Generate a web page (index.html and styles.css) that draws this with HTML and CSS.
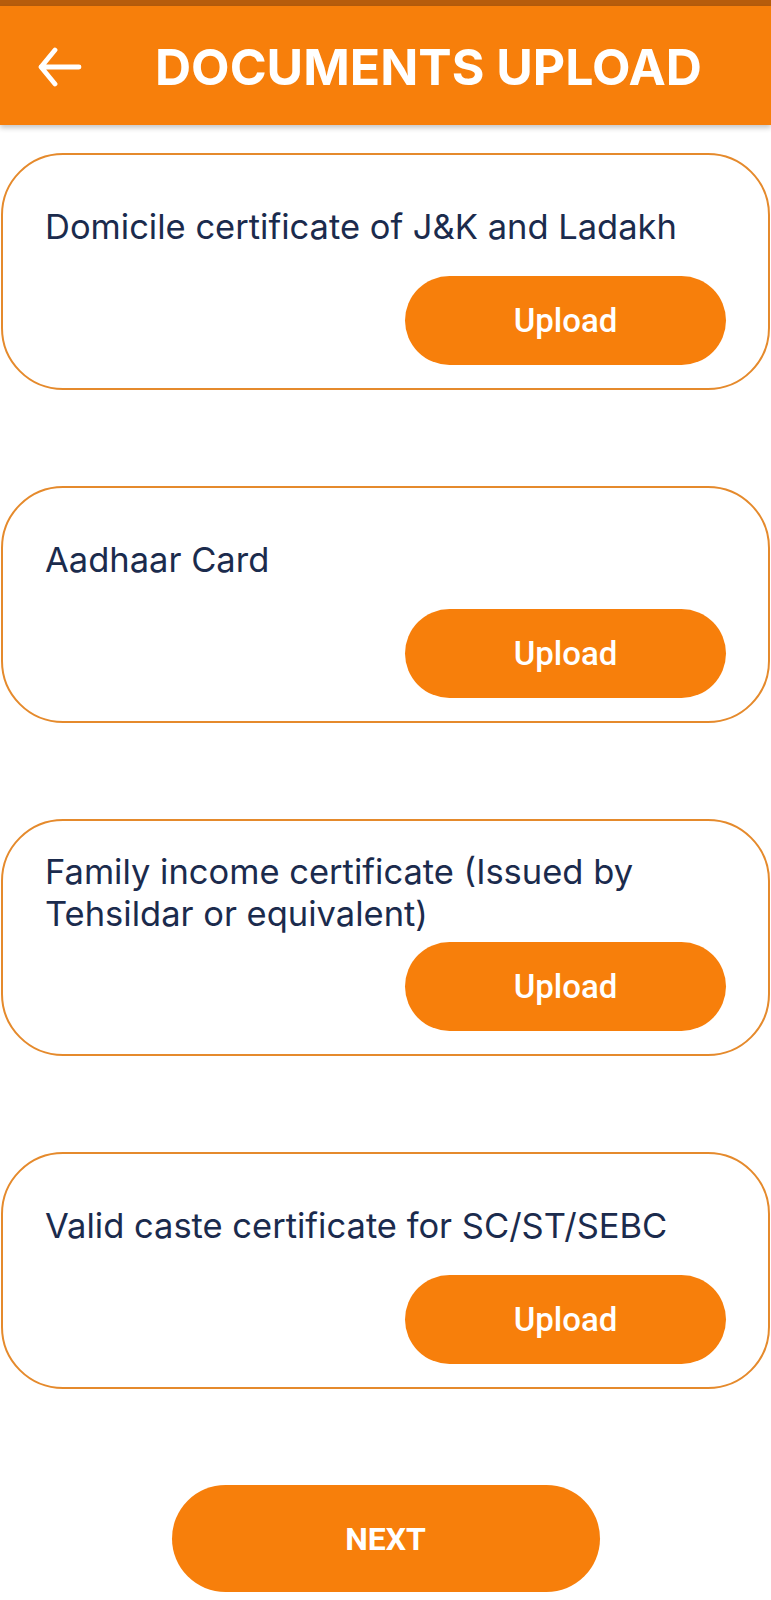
FILE: index.html
```html
<!DOCTYPE html>
<html lang="en">
<head>
<meta charset="utf-8">
<title>Documents Upload</title>
<link rel="stylesheet" href="styles.css">
</head>
<body>
<div class="status-strip"></div>
<header class="appbar">
  <svg class="back" viewBox="0 0 46 40" width="46" height="40" aria-hidden="true">
    <path d="M4 20 H42 M18 3 L4 20 L18 37" fill="none" stroke="#fff" stroke-width="4.8" stroke-linecap="round" stroke-linejoin="round"/>
  </svg>
  <h1 class="title">DOCUMENTS UPLOAD</h1>
</header>
<main class="content">
  <section class="card">
    <div class="card-text">Domicile certificate of J&amp;K and Ladakh</div>
    <div class="card-action"><button class="upload">Upload</button></div>
  </section>
  <section class="card">
    <div class="card-text">Aadhaar Card</div>
    <div class="card-action"><button class="upload">Upload</button></div>
  </section>
  <section class="card">
    <div class="card-text">Family income certificate (Issued by<br>Tehsildar or equivalent)</div>
    <div class="card-action"><button class="upload">Upload</button></div>
  </section>
  <section class="card">
    <div class="card-text">Valid caste certificate for SC/ST/SEBC</div>
    <div class="card-action"><button class="upload">Upload</button></div>
  </section>
  <div class="next-wrap"><button class="next">NEXT</button></div>
</main>
</body>
</html>
```
FILE: styles.css
```css
* { box-sizing: border-box; }
html, body { margin: 0; padding: 0; background: #ffffff; }
body { font-family: Inter, "Noto Sans", sans-serif; width: 771px; }

.status-strip { height: 6px; background: #b65c0c; }

.appbar {
  height: 119px;
  background: #f77f0b;
  display: flex;
  align-items: center;
  padding-left: 37px;
  box-shadow: 0 3px 5px rgba(0,0,0,0.22);
  position: relative;
}
.back { display: block; margin-top: 3px; }
.title {
  margin: 2px 0 0 72px;
  color: #ffffff;
  font-family: Inter, sans-serif;
  font-weight: 700;
  font-size: 50px;
  line-height: 1;
}

.content {
  display: flex;
  flex-direction: column;
  gap: 96px;
  padding-top: 28px;
}

.card {
  margin: 0 1px;
  height: 237px;
  border: 2px solid #e58a2c;
  border-radius: 62px;
  display: flex;
  flex-direction: column;
  padding: 22px 42px 23px 42px;
}
.card-text {
  flex: 1;
  display: flex;
  align-items: center;
  color: #1b2b4d;
  font-size: 34.5px;
  line-height: 42px;
  font-weight: 400;
}
.card-action { display: flex; justify-content: flex-end; }
.upload {
  width: 321px;
  height: 89px;
  border: none;
  border-radius: 45px;
  background: #f77f0b;
  color: #ffffff;
  font-family: Roboto, sans-serif;
  font-weight: 500;
  font-size: 33px;
  cursor: pointer;
}

.next-wrap { display: flex; justify-content: center; }
.next {
  width: 428px;
  height: 107px;
  border: none;
  border-radius: 54px;
  background: #f77f0b;
  color: #ffffff;
  font-family: Roboto, sans-serif;
  font-weight: 700;
  font-size: 32px;
}
```
